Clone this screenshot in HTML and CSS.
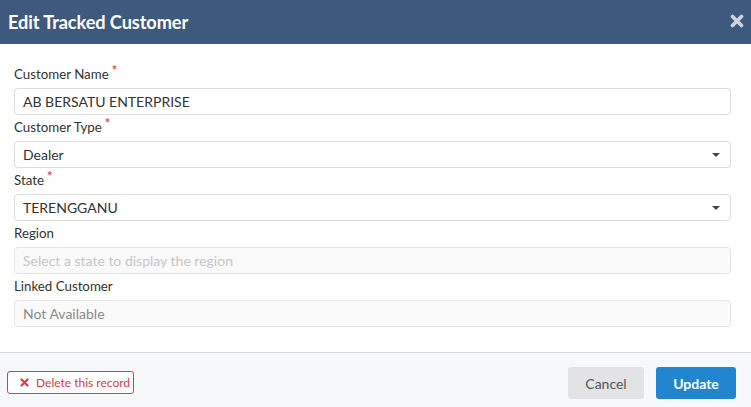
FILE: index.html
```html
<!DOCTYPE html>
<html>
<head>
<meta charset="utf-8">
<link rel="stylesheet" href="styles.css">
</head>
<body>
<div class="modal">
  <div class="header">
    <h1 class="title">Edit Tracked Customer</h1>
    <span class="close"><svg width="14" height="14" viewBox="0 0 14 14"><path d="M2.5 2.5L11.5 11.5M11.5 2.5L2.5 11.5" stroke="#ced5de" stroke-width="3.6" stroke-linecap="round"/></svg></span>
  </div>
  <div class="body">
    <div class="field">
      <label class="label">Customer Name<span class="req">*</span></label>
      <div class="input">AB BERSATU ENTERPRISE</div>
    </div>
    <div class="field">
      <label class="label">Customer Type<span class="req">*</span></label>
      <div class="input select">Dealer<span class="caret"></span></div>
    </div>
    <div class="field">
      <label class="label">State<span class="req">*</span></label>
      <div class="input select">TERENGGANU<span class="caret"></span></div>
    </div>
    <div class="field">
      <label class="label">Region</label>
      <div class="input disabled placeholder">Select a state to display the region</div>
    </div>
    <div class="field">
      <label class="label">Linked Customer</label>
      <div class="input disabled muted">Not Available</div>
    </div>
  </div>
  <div class="footer">
    <button class="btn-delete"><svg width="9" height="9" viewBox="0 0 9 9"><path d="M1.5 1.5L7.5 7.5M7.5 1.5L1.5 7.5" stroke="#e0393e" stroke-width="2.2" stroke-linecap="round"/></svg>Delete this record</button>
    <div class="actions">
      <button class="btn-cancel">Cancel</button>
      <button class="btn-update">Update</button>
    </div>
  </div>
</div>
</body>
</html>
```
FILE: styles.css
```css
* { box-sizing: border-box; }
html, body { margin: 0; padding: 0; background: #fff; }
body { font-family: Lato, "Open Sans", sans-serif; color: #333; width: 751px; height: 407px; overflow: hidden; }
.modal { display: flex; flex-direction: column; height: 407px; }
.header { height: 44px; background: #3d5a7e; display: flex; align-items: center; justify-content: space-between; padding: 0 7px 0 8px; }
.title { margin: 0; font-size: 18.2px; font-weight: 700; color: #fff; letter-spacing: -0.1px; }
.close { display: flex; width: 14px; height: 14px; margin-top: -2px; }
.body { flex: 1; padding: 19px 20px 0 14px; display: flex; flex-direction: column; }
.field { display: flex; flex-direction: column; }
.label { font-size: 13.3px; line-height: 16px; height: 25px; padding-top: 3px; color: #333; }
.req { color: #e5484d; font-size: 13px; font-weight: 700; position: relative; top: -4px; margin-left: 3px; line-height: 0; }
.input { height: 27px; border: 1px solid #dcdcdc; border-radius: 4px; padding: 0 8px; font-size: 14px; line-height: 25px; color: #333; position: relative; margin-bottom: 1px; }
.select { padding-right: 24px; }
.caret { position: absolute; right: 10px; top: 11px; width: 0; height: 0; border-left: 4px solid transparent; border-right: 4px solid transparent; border-top: 4px solid #444; }
.disabled { background: #fafafa; border-color: #e6e6e6; }
.placeholder { color: #c6c6c6; }
.muted { color: #8a8a8a; }
.footer { height: 55px; border-top: 1px solid #d9d9d9; background: #f7f8fa; display: flex; align-items: flex-start; justify-content: space-between; padding: 14px 15px 0 7px; }
button { font-family: Lato, "Open Sans", sans-serif; cursor: pointer; }
.btn-delete { margin-top: 4px; height: 23px; width: 127px; border: 1px solid #e0393e; border-radius: 3px; background: #fff; color: #e0393e; font-size: 12px; display: flex; align-items: center; gap: 7px; padding: 0 0 0 12px; white-space: nowrap; }
.actions { display: flex; gap: 12px; }
.btn-cancel { width: 76px; height: 32px; border: none; border-radius: 3px; background: #e2e3e5; color: #555; font-size: 14px; }
.btn-update { width: 80px; height: 32px; border: none; border-radius: 3px; background: #2285d0; color: #fff; font-size: 14px; font-weight: 700; }
```
